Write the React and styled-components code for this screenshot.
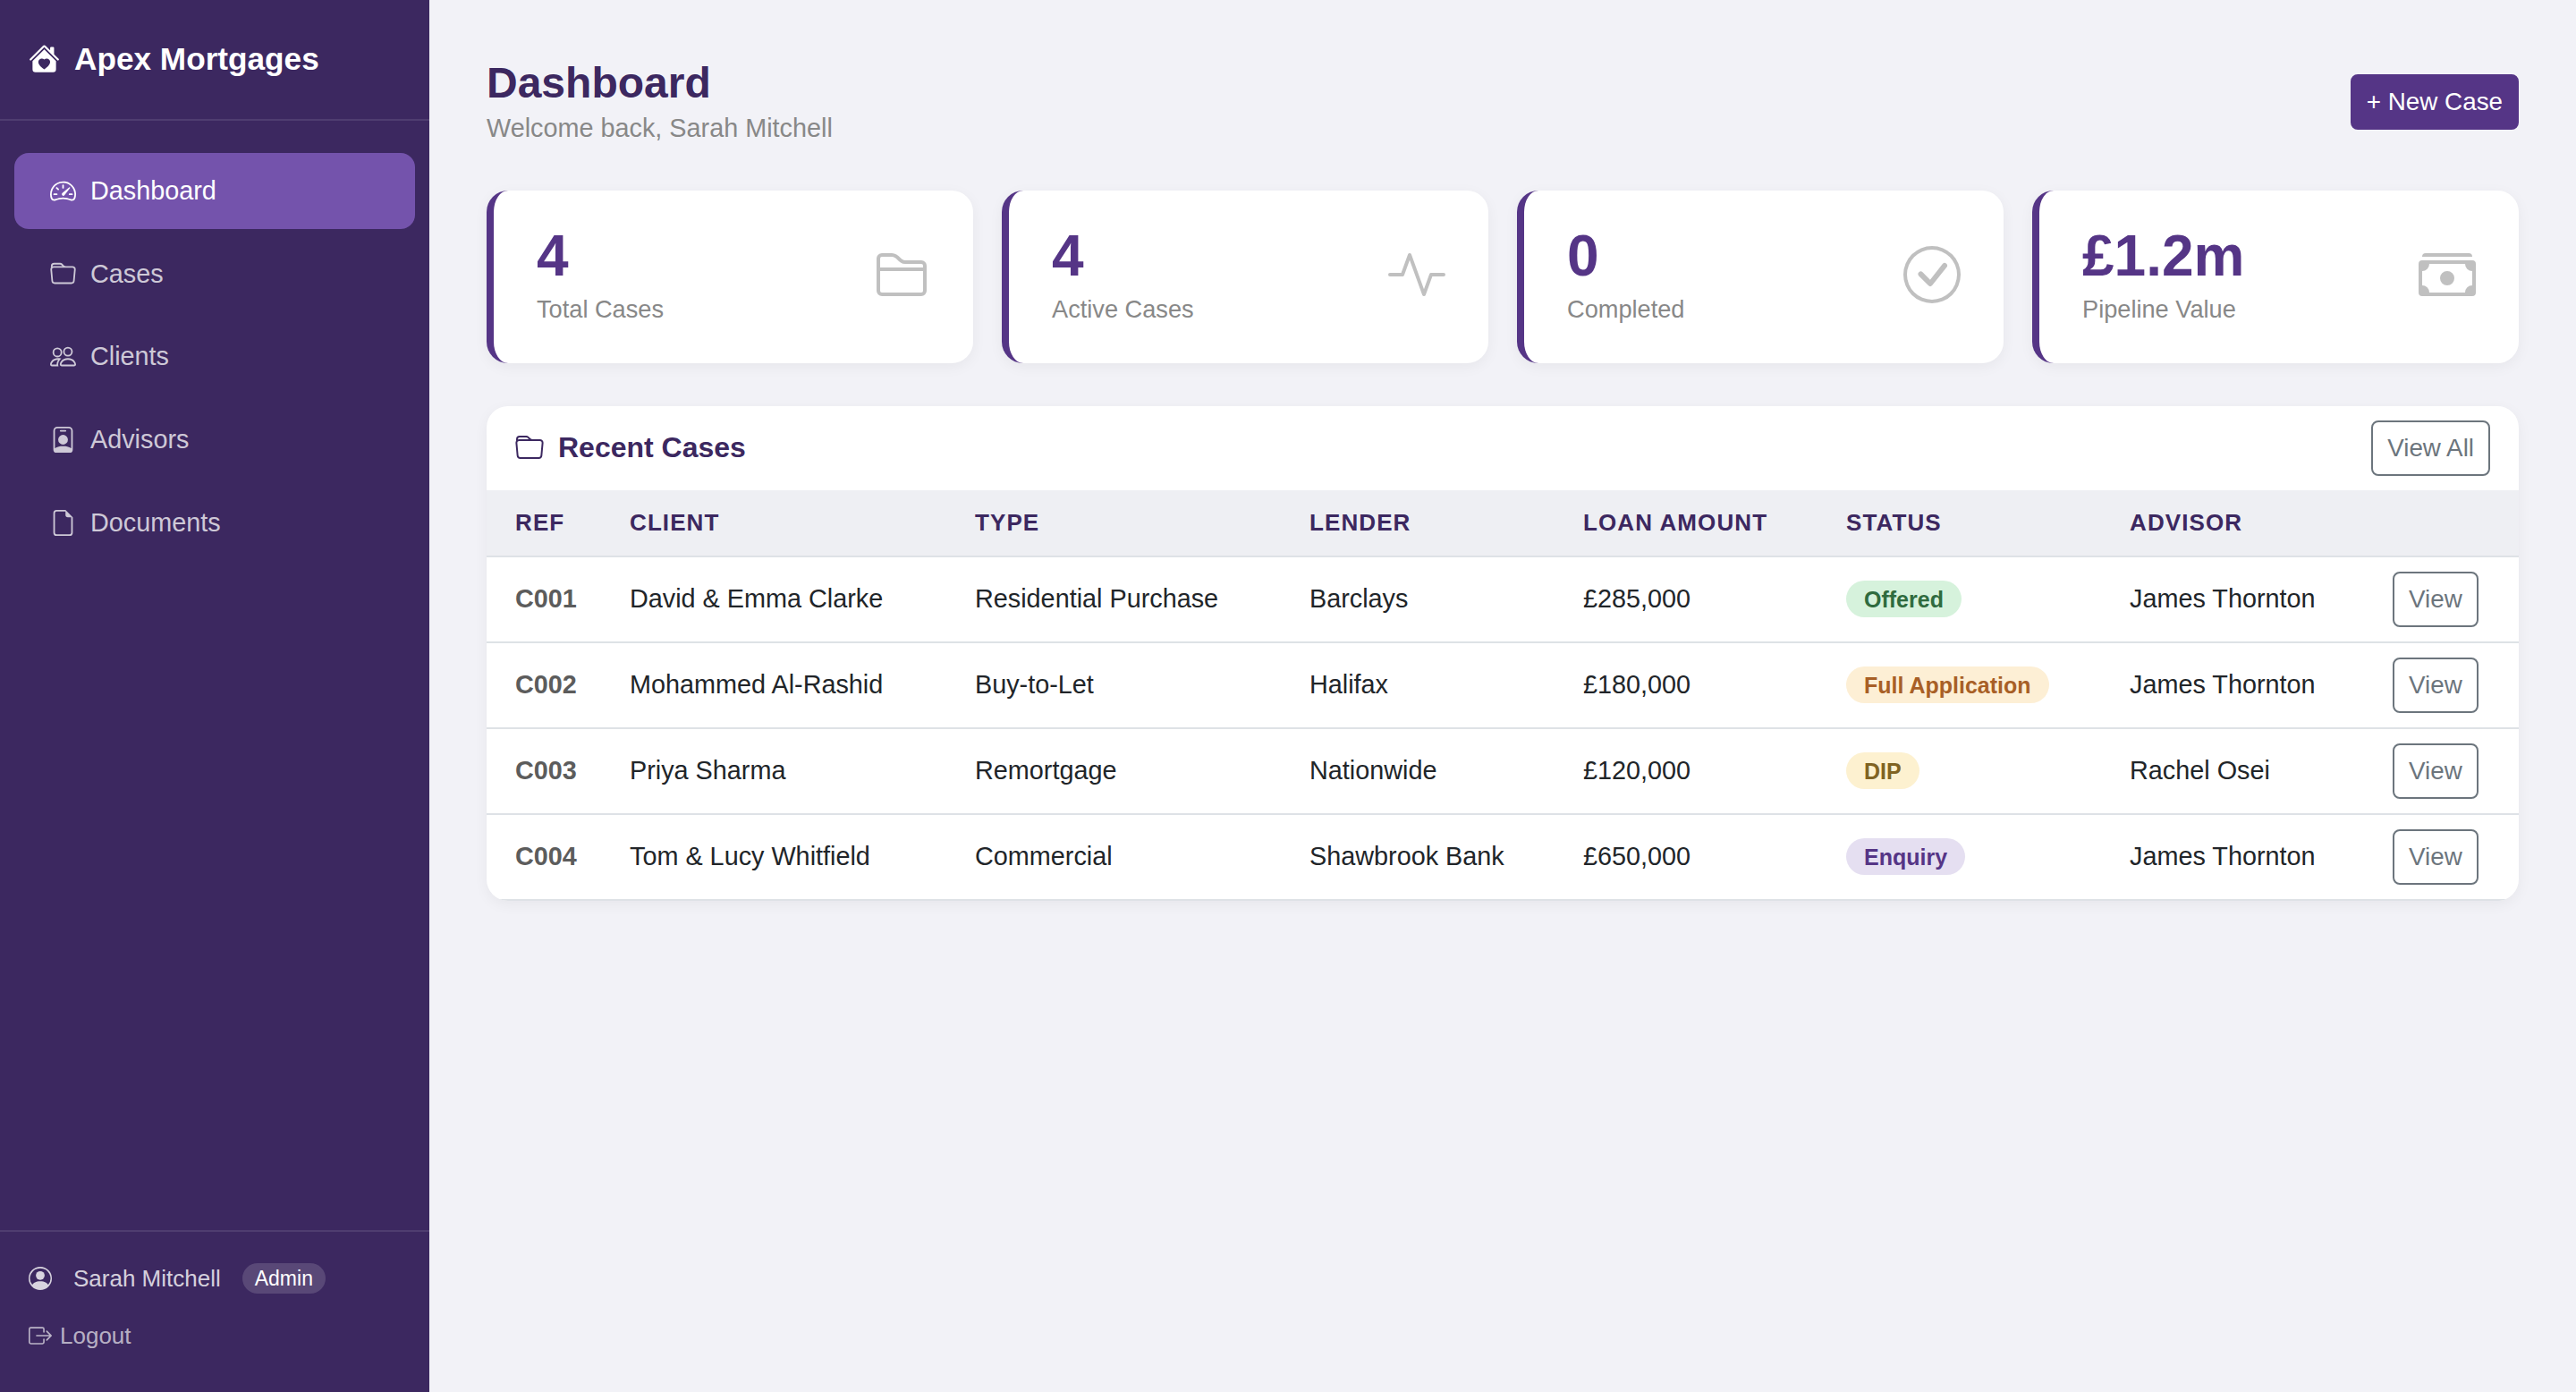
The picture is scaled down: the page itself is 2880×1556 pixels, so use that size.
import styled, { createGlobalStyle } from 'styled-components';
import {
  BsActivity,
  BsBoxArrowRight,
  BsCashStack,
  BsCheckCircle,
  BsFileEarmark,
  BsFolder,
  BsFolder2,
  BsHouseHeartFill,
  BsPeople,
  BsPersonBadge,
  BsPersonCircle,
  BsSpeedometer2,
} from 'react-icons/bs';

const GlobalStyle = createGlobalStyle`
  * {
    box-sizing: border-box;
  }
  body {
    margin: 0;
    background: #f2f2f7;
    font-family: "Liberation Sans", Arial, sans-serif;
    color: #212529;
  }
`;

const Layout = styled.div`
  display: flex;
  height: 100vh;
  overflow: hidden;
`;

const Sidebar = styled.aside`
  display: flex;
  flex-direction: column;
  flex: 0 0 480px;
  background: #3c2860;
`;

const Brand = styled.div`
  display: flex;
  align-items: center;
  gap: 16px;
  height: 135px;
  padding: 0 32px 2px;
  border-bottom: 2px solid rgba(255, 255, 255, 0.1);
  color: #fff;
  font-size: 35.2px;
  font-weight: 700;
  svg {
    flex: none;
  }
`;

const Nav = styled.nav`
  display: flex;
  flex-direction: column;
  gap: 8px;
  padding: 36px 16px;
`;

const NavItem = styled.a`
  display: flex;
  align-items: center;
  gap: 16px;
  height: 84.8px;
  padding: 0 40px;
  border-radius: 16px;
  font-size: 28.8px;
  color: ${props => (props.$active ? '#fff' : 'rgba(255, 255, 255, 0.75)')};
  background: ${props => (props.$active ? '#7453ac' : 'transparent')};
`;

const SideFooter = styled.div`
  margin-top: auto;
  padding: 32px 32px 43px;
  border-top: 2px solid rgba(255, 255, 255, 0.1);
`;

const UserRow = styled.div`
  display: flex;
  align-items: center;
  gap: 24px;
  height: 40px;
  font-size: 26px;
  color: rgba(255, 255, 255, 0.8);
`;

const RoleBadge = styled.span`
  padding: 0 14px;
  line-height: 34px;
  border-radius: 17px;
  font-size: 23px;
  color: #fff;
  background: rgba(255, 255, 255, 0.15);
`;

const LogoutLink = styled.a`
  display: flex;
  align-items: center;
  gap: 9px;
  height: 40px;
  margin-top: 24px;
  font-size: 26px;
  color: rgba(255, 255, 255, 0.65);
`;

const Main = styled.main`
  flex: 1;
  padding: 64px;
`;

const PageHeader = styled.header`
  display: flex;
  align-items: center;
  justify-content: space-between;
  margin-bottom: 48px;
`;

const Title = styled.h1`
  margin: 0;
  font-size: 48px;
  line-height: 57.6px;
  font-weight: 700;
  color: #3c2860;
`;

const Subtitle = styled.div`
  font-size: 28.8px;
  line-height: 43.2px;
  color: #888;
`;

const Button = styled.button`
  padding: 8px 16px;
  border: 2px solid ${props => (props.$primary ? '#553586' : '#6c757d')};
  border-radius: 8px;
  background: ${props => (props.$primary ? '#553586' : 'transparent')};
  color: ${props => (props.$primary ? '#fff' : '#6c757d')};
  font-family: inherit;
  font-size: 27.8px;
  line-height: 42px;
`;

const StatGrid = styled.section`
  display: grid;
  grid-template-columns: repeat(4, 1fr);
  gap: 32px;
  margin-bottom: 48px;
`;

const StatCard = styled.div`
  display: flex;
  align-items: center;
  justify-content: space-between;
  height: 193px;
  padding: 33px 48px 37px;
  border-left: 8px solid #553586;
  border-radius: 24px;
  background: #fff;
  box-shadow: 0 4px 16px rgba(0, 0, 0, 0.05);
  color: #c0c0c0;
`;

const StatValue = styled.div`
  margin-bottom: 2px;
  font-size: 64px;
  line-height: 76.8px;
  font-weight: 700;
  color: #553586;
`;

const StatLabel = styled.div`
  font-size: 27.2px;
  line-height: 40.8px;
  color: #888;
`;

const Panel = styled.section`
  overflow: hidden;
  border-radius: 24px;
  background: #fff;
  box-shadow: 0 4px 16px rgba(0, 0, 0, 0.05);
`;

const PanelHeader = styled.div`
  display: flex;
  align-items: center;
  justify-content: space-between;
  height: 94px;
  padding: 0 32px;
`;

const PanelTitle = styled.h2`
  display: flex;
  align-items: center;
  gap: 16px;
  margin: 0;
  font-size: 32px;
  font-weight: 700;
  color: #3c2860;
`;

const Table = styled.table`
  width: 100%;
  border-collapse: collapse;
  table-layout: fixed;
`;

const Th = styled.th`
  width: ${props => props.$width}px;
  height: 74px;
  padding: 1px 0 0 32px;
  border-bottom: 2px solid #dee2e6;
  background: #eeeff3;
  text-align: left;
  font-size: 26px;
  font-weight: 700;
  letter-spacing: 1.1px;
  color: #3c2860;
`;

const Td = styled.td`
  height: 96px;
  padding: 0 0 0 32px;
  border-bottom: 2px solid #dee2e6;
  font-size: 28.8px;
  white-space: nowrap;
`;

const RefCell = styled(Td)`
  font-weight: 700;
  color: #5c5c5c;
`;

const StatusBadge = styled.span`
  display: inline-block;
  padding: 6px 20px 4px;
  border-radius: 21px;
  font-size: 25px;
  line-height: 31px;
  font-weight: 700;
  color: ${props => props.$color};
  background: ${props => props.$bg};
`;

const statuses = {
  Offered: { color: '#2f6b3e', bg: '#d6f2dc' },
  'Full Application': { color: '#a85f26', bg: '#fdefd5' },
  DIP: { color: '#806322', bg: '#fdf1d0' },
  Enquiry: { color: '#553586', bg: '#e5dff1' },
};

const navLinks = [
  { label: 'Dashboard', icon: BsSpeedometer2, active: true },
  { label: 'Cases', icon: BsFolder },
  { label: 'Clients', icon: BsPeople },
  { label: 'Advisors', icon: BsPersonBadge },
  { label: 'Documents', icon: BsFileEarmark },
];

const stats = [
  { value: '4', label: 'Total Cases', icon: BsFolder2 },
  { value: '4', label: 'Active Cases', icon: BsActivity },
  { value: '0', label: 'Completed', icon: BsCheckCircle },
  { value: '£1.2m', label: 'Pipeline Value', icon: BsCashStack },
];

const columns = [
  { label: 'Ref', width: 128 },
  { label: 'Client', width: 386 },
  { label: 'Type', width: 374 },
  { label: 'Lender', width: 306 },
  { label: 'Loan Amount', width: 294 },
  { label: 'Status', width: 317 },
  { label: 'Advisor', width: 294 },
  { label: '', width: 173 },
];

const cases = [
  { ref: 'C001', client: 'David & Emma Clarke', type: 'Residential Purchase', lender: 'Barclays', amount: '£285,000', status: 'Offered', advisor: 'James Thornton' },
  { ref: 'C002', client: 'Mohammed Al-Rashid', type: 'Buy-to-Let', lender: 'Halifax', amount: '£180,000', status: 'Full Application', advisor: 'James Thornton' },
  { ref: 'C003', client: 'Priya Sharma', type: 'Remortgage', lender: 'Nationwide', amount: '£120,000', status: 'DIP', advisor: 'Rachel Osei' },
  { ref: 'C004', client: 'Tom & Lucy Whitfield', type: 'Commercial', lender: 'Shawbrook Bank', amount: '£650,000', status: 'Enquiry', advisor: 'James Thornton' },
];

function App() {
  return (
    <>
      <GlobalStyle />
      <Layout>
        <Sidebar>
          <Brand>
            <BsHouseHeartFill size={35} />
            Apex Mortgages
          </Brand>
          <Nav>
            {navLinks.map(({ label, icon: Icon, active }) => (
              <NavItem key={label} $active={active}>
                <Icon size={29} />
                {label}
              </NavItem>
            ))}
          </Nav>
          <SideFooter>
            <UserRow>
              <BsPersonCircle size={26} />
              Sarah Mitchell
              <RoleBadge>Admin</RoleBadge>
            </UserRow>
            <LogoutLink>
              <BsBoxArrowRight size={26} />
              Logout
            </LogoutLink>
          </SideFooter>
        </Sidebar>
        <Main>
          <PageHeader>
            <div>
              <Title>Dashboard</Title>
              <Subtitle>Welcome back, Sarah Mitchell</Subtitle>
            </div>
            <Button $primary>+ New Case</Button>
          </PageHeader>
          <StatGrid>
            {stats.map(({ value, label, icon: Icon }) => (
              <StatCard key={label}>
                <div>
                  <StatValue>{value}</StatValue>
                  <StatLabel>{label}</StatLabel>
                </div>
                <Icon size={64} />
              </StatCard>
            ))}
          </StatGrid>
          <Panel>
            <PanelHeader>
              <PanelTitle>
                <BsFolder size={32} />
                Recent Cases
              </PanelTitle>
              <Button>View All</Button>
            </PanelHeader>
            <Table>
              <thead>
                <tr>
                  {columns.map(col => (
                    <Th key={col.label} $width={col.width}>
                      {col.label.toUpperCase()}
                    </Th>
                  ))}
                </tr>
              </thead>
              <tbody>
                {cases.map(item => (
                  <tr key={item.ref}>
                    <RefCell>{item.ref}</RefCell>
                    <Td>{item.client}</Td>
                    <Td>{item.type}</Td>
                    <Td>{item.lender}</Td>
                    <Td>{item.amount}</Td>
                    <Td>
                      <StatusBadge
                        $color={statuses[item.status].color}
                        $bg={statuses[item.status].bg}
                      >
                        {item.status}
                      </StatusBadge>
                    </Td>
                    <Td>{item.advisor}</Td>
                    <Td>
                      <Button>View</Button>
                    </Td>
                  </tr>
                ))}
              </tbody>
            </Table>
          </Panel>
        </Main>
      </Layout>
    </>
  );
}

export default App;
